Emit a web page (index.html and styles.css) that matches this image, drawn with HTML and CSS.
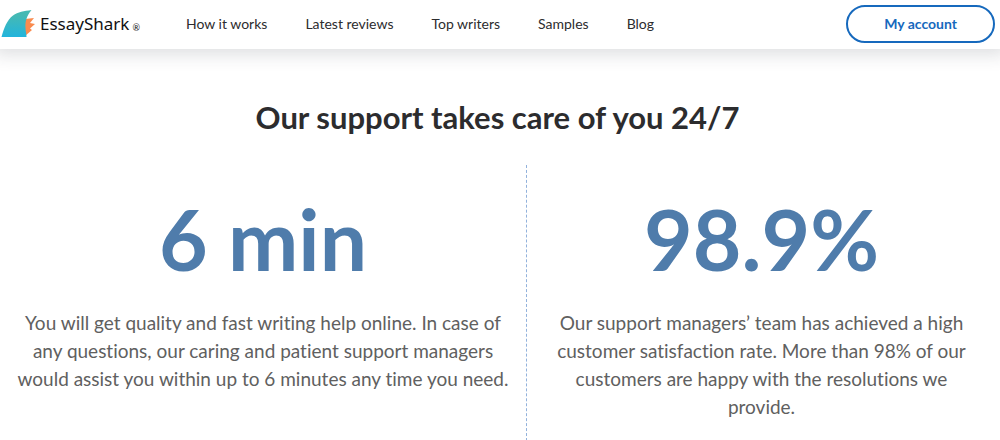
FILE: index.html
```html
<!DOCTYPE html>
<html lang="en">
<head>
<meta charset="utf-8">
<title>EssayShark</title>
<link rel="stylesheet" href="styles.css">
</head>
<body>
<header class="header">
  <a class="logo" href="#">
    <svg class="logo-mark" viewBox="0 0 36 30" aria-hidden="true">
      <defs>
        <linearGradient id="fin" x1="0" y1="0" x2="0" y2="1">
          <stop offset="0.2" stop-color="#45b9b4"/>
          <stop offset="1" stop-color="#22b4dc"/>
        </linearGradient>
      </defs>
      <path d="M25 10L34 9L30 14L35 15L30 19.500L32 21L25 27Z" fill="#f98b4f"/>
      <path d="M1.500 28C4 19 7 11 13 6.500C18 3 24 2 31.500 1C26.500 7 25 13 25.500 19C25.500 22 26.500 25 26.500 28Z" fill="url(#fin)"/>
    </svg>
    <span class="logo-name">EssayShark</span><span class="logo-reg">®</span>
  </a>
  <nav class="nav">
    <a href="#">How it works</a>
    <a href="#">Latest reviews</a>
    <a href="#">Top writers</a>
    <a href="#">Samples</a>
    <a href="#">Blog</a>
  </nav>
  <a class="account" href="#">My account</a>
</header>
<main class="support">
  <h1 class="title">Our support takes care of you 24/7</h1>
  <div class="stats">
    <section class="stat">
      <h2 class="figure">6 min</h2>
      <p class="text">You will get quality and fast writing help online. In case of any questions, our caring and patient support managers would assist you within up to 6 minutes any time you need.</p>
    </section>
    <section class="stat">
      <h2 class="figure">98.9%</h2>
      <p class="text">Our support managers’ team has achieved a high customer satisfaction rate. More than 98% of our customers are happy with the resolutions we provide.</p>
    </section>
  </div>
</main>
</body>
</html>
```

FILE: styles.css
```css
* { box-sizing: border-box; }
body { margin: 0; background: #fff; color: #2c2c2e; font-family: Lato, "Liberation Sans", sans-serif; font-variant-ligatures: none; }
a { color: inherit; text-decoration: none; }
.header { display: flex; align-items: center; padding: 5px 5px 6px 0; box-shadow: 0 0 16px 6px rgba(40, 50, 60, .15); }
.logo { display: flex; align-items: center; width: 186px; color: #111; }
.logo-mark { width: 36px; height: 30px; margin-right: 4px; }
.logo-name { font-family: "Noto Sans", sans-serif; font-size: 17px; line-height: 24px; }
.logo-reg { margin: 8px 0 0 3px; font-size: 9px; line-height: 10px; }
.nav { display: flex; gap: 38px; font-size: 14px; line-height: 20px; }
.account { margin-left: auto; padding: 0 36px; border: 2px solid #1669bd; border-radius: 19px; color: #1669bd; font-size: 14px; font-weight: 700; line-height: 34px; text-align: center; }
.support { padding-top: 48px; }
.title { margin: 0; padding-right: 5px; font-size: 31px; font-weight: 700; line-height: 40px; text-align: center; }
.stats { display: grid; grid-template-columns: 526fr 474fr; margin-top: 28px; }
.stat { padding: 30px 16px 20px; text-align: center; }
.stat + .stat { padding: 30px 24px 20px 20px; border-left: 1px dashed #92b2dc; }
.figure { margin: 0; color: #4f7cab; font-size: 84px; font-weight: 700; line-height: 88px; }
.text { margin: 26px 0 0; color: #606060; font-size: 19px; line-height: 28px; }
```
